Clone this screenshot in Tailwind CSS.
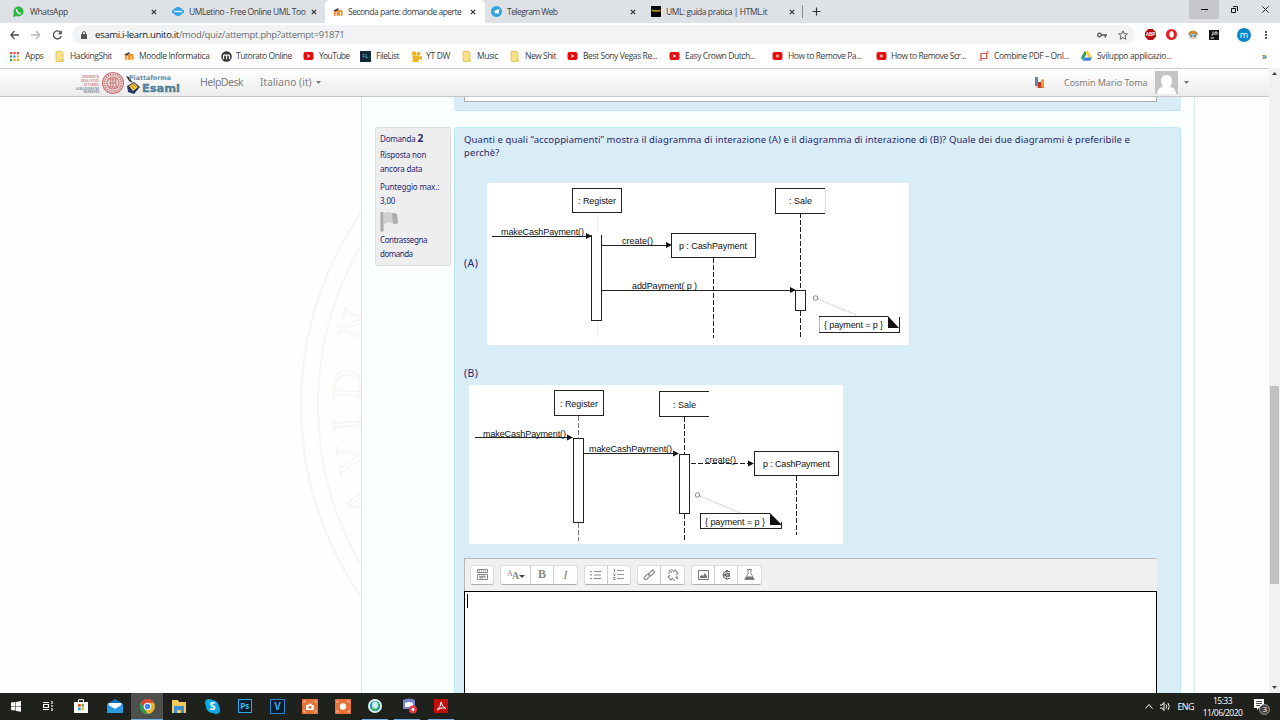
<!DOCTYPE html>
<html lang="it">
<head>
<meta charset="utf-8">
<title>Seconda parte: domande aperte</title>
<script src="https://cdn.jsdelivr.net/npm/@tailwindcss/browser@4"></script>
</head>
<body class="w-[1280px] h-[720px] overflow-hidden bg-white flex flex-col font-['Open_Sans',sans-serif] text-[#3c4043]">
<svg class="hidden">
  <defs>
    <symbol id="moodle" viewBox="0 0 12 10"><path d="M2 9V5q0-1.500 1.500-1.500T5 5v4M6.500 9V5Q6.500 3.500 8 3.500T9.500 5v4" fill="none" stroke="#f28c28" stroke-width="2"/><path d="M0 3.500 5 1l2 1-4 2.500z" fill="#444"/></symbol>
    <symbol id="folder" viewBox="0 0 9 11"><path d="M1 .5h6l1 1v9H1z" fill="#fbe08a" stroke="#e3bd4c" stroke-width=".8"/><path d="M6.500 8h2v2.500h-2z" fill="#e9c65c"/></symbol>
    <symbol id="yt" viewBox="0 0 11 8"><rect x=".5" width="10" height="8" rx="2" fill="#e60f0f"/><path d="M4.500 2.300v3.400L7.300 4z" fill="#fff"/></symbol>
    <symbol id="x" viewBox="0 0 6 6"><path d="m.8.8 4.400 4.400m0-4.400L.8 5.200" stroke="#333" stroke-width="1.200"/></symbol>
  </defs>
</svg>

<!-- tab strip -->
<div class="h-[23px] shrink-0 bg-[#dee1e6] flex text-[8.500px] leading-[23px] whitespace-nowrap">
  <div class="w-[166px] pl-[13px] pr-[9px] flex items-center">
    <svg class="w-[11px] h-[11px] mr-[6px]" viewBox="0 0 11 11"><circle cx="5.500" cy="5.500" r="5" fill="#2cb742"/><path d="M0 11 1 7l3 3z" fill="#2cb742"/><path d="M3.500 3.300c0 2.500 2 4.500 4.200 4.300" stroke="#fff" stroke-width="1.600" fill="none"/></svg>
    <span class="flex-1 tracking-[-0.35px]">WhatsApp</span><svg class="w-[6px] h-[6px]"><use href="#x"/></svg>
  </div>
  <div class="w-[159px] pl-[6px] pr-[8px] flex items-center">
    <svg class="w-[12px] h-[11px] mr-[5px]" viewBox="0 0 12 11"><circle cx="6" cy="5.500" r="4.500" fill="#35a5e5"/><rect y="3.800" width="12" height="3.400" rx="1" fill="#35a5e5"/><path d="M2 5.500h8" stroke="#d8effc" stroke-width="1.400"/></svg>
    <span class="flex-1 w-0 mr-[5px] tracking-[-0.42px]">UMLetino - Free Online UML Too</span><svg class="w-[6px] h-[6px]"><use href="#x"/></svg>
  </div>
  <div class="w-[160px] pl-[8px] pr-[9px] flex items-center bg-white rounded-t-[5px]">
    <svg class="w-[11px] h-[10px] mr-[4px]"><use href="#moodle"/></svg>
    <span class="flex-1 w-0 mr-[5px] tracking-[-0.5px]">Seconda parte: domande aperte</span><svg class="w-[6px] h-[6px]"><use href="#x"/></svg>
  </div>
  <div class="w-[160px] pl-[6px] pr-[9px] flex items-center">
    <svg class="w-[11px] h-[11px] mr-[5px]" viewBox="0 0 11 11"><circle cx="5.500" cy="5.500" r="5.500" fill="#2fa3dc"/><path d="m2 5.500 6.500-2.700-1.200 5.500L5.500 7l-1 1-.4-2z" fill="#fff"/></svg>
    <span class="flex-1 tracking-[-0.55px]">Telegram Web</span><svg class="w-[6px] h-[6px]"><use href="#x"/></svg>
  </div>
  <div class="w-[158px] pl-[6px] pr-[8px] flex items-center">
    <div class="w-[10px] h-[11px] mr-[5px] bg-black text-[#d9cc20] text-[4px] leading-[10px] tracking-[-0.3px] font-bold text-center">html</div>
    <span class="flex-1 tracking-[-0.45px]">UML: guida pratica | HTML.it</span><svg class="w-[6px] h-[6px]"><use href="#x"/></svg>
  </div>
  <div class="w-[386px] pl-0 flex items-center"><div class="w-px h-[13px] bg-[#888c91] -ml-px"></div>
    <svg class="w-[9px] h-[9px] ml-[9px]" viewBox="0 0 9 9"><path d="M4.500.5v8m-4-4h8" stroke="#333" stroke-width="1.200"/></svg></div>
  <div class="w-[30px] h-[19px] bg-[#c4c6cb] flex items-center justify-center"><div class="w-[7px] h-px bg-black"></div></div>
  <div class="w-[31px] h-[19px] flex items-center justify-center"><svg class="w-[7px] h-[7px]" viewBox="0 0 7 7"><path d="M.5 2.500h4v4h-4zM2 .6h4.500V5" fill="none" stroke="#111"/></svg></div>
  <div class="w-[30px] h-[19px] flex items-center justify-center"><svg class="w-[7px] h-[7px]" viewBox="0 0 7 7"><path d="m.3.3 6.400 6.400m0-6.400L.3 6.700" stroke="#111" stroke-width=".9"/></svg></div>
</div>

<!-- address bar -->
<div class="h-[23px] shrink-0 flex items-center pl-[10px] bg-white">
  <svg class="w-[53px] h-[12px] mr-[9px]" viewBox="0 0 53 12"><g fill="none" stroke-width="1.300"><path d="M9 6H.8M4.500 2 .8 6l3.700 4" stroke="#4a4d51"/><path d="M21 6h8.500M26 2l3.700 4L26 10" stroke="#b5b8bb"/><path d="M50.500 3.300A4 4 0 1 0 51.300 7" stroke="#4a4d51"/></g><path d="M51.800 1.300v4h-4z" fill="#4a4d51"/></svg>
  <div class="w-[1063px] h-[19px] rounded-full bg-[#f1f3f4] flex items-center pl-[9px] pr-[7px]">
    <svg class="w-[6px] h-[8px] mr-[8px]" viewBox="0 0 6 8"><rect y="3" width="6" height="5" rx=".5" fill="#555"/><path d="M1.500 3.500V2q0-1.400 1.500-1.400T4.500 2v1.500" fill="none" stroke="#555"/></svg>
    <div class="flex-1 text-[9.500px] leading-[18px] text-[#6a6e73] tracking-[-0.32px] whitespace-nowrap"><span class="text-[#202124]">esami.i-learn.unito.it</span>/mod/quiz/attempt.php?attempt=91871</div>
    <svg class="w-[10px] h-[6px] mr-[11px]" viewBox="0 0 10 6"><circle cx="2.500" cy="3" r="1.800" fill="none" stroke="#555" stroke-width="1.300"/><path d="M4 3h6M8.300 3v2.500" stroke="#555" stroke-width="1.500"/></svg>
    <svg class="w-[10px] h-[10px]" viewBox="0 0 10 10"><path d="m5 .8 1.200 2.900 3.200.2L7 6l.8 3.200L5 7.500 2.200 9.200 3 6 .6 3.900l3.200-.2z" fill="none" stroke="#555" stroke-width=".9"/></svg>
  </div>
  <div class="flex items-center pl-[10px]">
    <svg class="w-[11px] h-[11px] mr-[10px]" viewBox="0 0 11 11"><path d="M3.200 0h4.600L11 3.200v4.600L7.800 11H3.200L0 7.800V3.200z" fill="#b90d14"/><text x="5.500" y="7.300" font-family="Liberation Sans" font-weight="bold" font-size="4.600" fill="#fff" text-anchor="middle">ABP</text></svg>
    <svg class="w-[11px] h-[11px] mr-[11px]" viewBox="0 0 11 11"><circle cx="5.500" cy="5.500" r="5.500" fill="#e01f26"/><path d="M3.500 5V3.500h.8V2.500h.9V2h.8v.5h.9v1h.8V7L7 8.500H4.800L3 6z" fill="#fff"/></svg>
    <svg class="w-[10px] h-[10px] mr-[11px]" viewBox="0 0 10 10"><path d="M0 5q0-4 5-4.500 5 .5 5 4.500z" fill="#c98a3c"/><rect x="1" y="4" width="8" height="5" rx="2" fill="#e6d3b0"/><circle cx="3.300" cy="5.800" r="1.400" fill="#5087b8"/><circle cx="6.800" cy="5.800" r="1.400" fill="#5087b8"/></svg>
    <svg class="w-[10px] h-[10px] mr-[18px]" viewBox="0 0 10 10"><rect width="10" height="10" fill="#151515"/><path d="M1.500 8h3.500M4 1.500V5H2.500M6 5V2h2v3" stroke="#fff" stroke-width=".9" fill="none"/></svg>
    <div class="w-[14px] h-[14px] rounded-full bg-[#0a86cc] text-white text-[9px] leading-[13px] text-center mr-[14px]">m</div>
    <svg class="w-[2px] h-[8px]" viewBox="0 0 2 8"><path d="M0 0h2v2H0zM0 3h2v2H0zM0 6h2v2H0z" fill="#555"/></svg>
  </div>
</div>

<!-- bookmarks -->
<div class="h-[22px] pb-[2px] shrink-0 flex items-center pl-[10px] text-[8.500px] leading-[20px] tracking-[-0.5px] whitespace-nowrap bg-white [&>div]:flex [&>div]:items-center [&>div]:shrink-0">
  <div class="w-[45px]"><svg class="w-[9px] h-[9px] mr-[6px]" viewBox="0 0 9 9"><path d="M0 0h2.200v2.200H0zM3.400 0h2.200v2.200H3.400zM6.800 0H9v2.200H6.800z" fill="#d9453a"/><path d="M0 3.400h2.200v2.200H0z" fill="#3a9a54"/><path d="M3.400 3.400h2.200v2.200H3.400z" fill="#3d7de0"/><path d="M6.800 3.400H9v2.200H6.800zM3.400 6.800h2.200V9H3.400zM6.800 6.800H9V9H6.800z" fill="#e3a92c"/><path d="M0 6.800h2.200V9H0z" fill="#3a9a54"/></svg><span class="tracking-[-0.35px]">Apps</span></div>
  <div class="w-[69px]"><svg class="w-[9px] h-[11px] mr-[6px]"><use href="#folder"/></svg><span class="tracking-[-0.43px]">HackingShit</span></div>
  <div class="w-[97px]"><svg class="w-[11px] h-[10px] mr-[4px]"><use href="#moodle"/></svg><span class="tracking-[-0.4px]">Moodle Informatica</span></div>
  <div class="w-[82px]"><svg class="w-[11px] h-[11px] mr-[4px]" viewBox="0 0 11 11"><circle cx="5.500" cy="5.500" r="5.300" fill="#333"/><path d="M2.500 8.200V5q0-1.200 1.500-1.200T5.500 5v3.200M5.500 5Q5.500 3.800 7 3.800T8.500 5v3.200" fill="none" stroke="#fff" stroke-width="1.300"/></svg><span class="tracking-[-0.45px]">Tutorato Online</span></div>
  <div class="w-[57px]"><svg class="w-[11px] h-[8px] mr-[5px]"><use href="#yt"/></svg><span class="tracking-[-0.65px]">YouTube</span></div>
  <div class="w-[51px]"><span class="w-[11px] h-[11px] mr-[5px] bg-[#13293a] text-[#58b8dd] text-[6px] leading-[11px] text-center tracking-normal">FL</span>FileList</div>
  <div class="w-[51px]"><svg class="w-[11px] h-[11px] mr-[4px]" viewBox="0 0 11 11"><g fill="#eeb31c"><circle cx="3" cy="2.500" r="2.300"/><circle cx="7.500" cy="2.700" r="2"/><rect x="1.500" y="4.500" width="6.500" height="4.500" rx="1"/><path d="m8 6 3-1.500V9L8 8zM2 9h5l1 2H1z"/></g></svg><span class="tracking-[-0.3px]">YT DW</span></div>
  <div class="w-[48px]"><svg class="w-[9px] h-[11px] mr-[6px]"><use href="#folder"/></svg><span class="tracking-[-0.45px]">Music</span></div>
  <div class="w-[57px]"><svg class="w-[9px] h-[11px] mr-[6px]"><use href="#folder"/></svg>New Shit</div>
  <div class="w-[102px]"><svg class="w-[11px] h-[8px] mr-[5px]"><use href="#yt"/></svg><span class="tracking-[-0.43px]">Best Sony Vegas Re...</span></div>
  <div class="w-[103px]"><svg class="w-[11px] h-[8px] mr-[5px]"><use href="#yt"/></svg><span class="tracking-[-0.43px]">Easy Crown Dutch...</span></div>
  <div class="w-[104px]"><svg class="w-[11px] h-[8px] mr-[5px]"><use href="#yt"/></svg><span class="tracking-[-0.4px]">How to Remove Pa...</span></div>
  <div class="w-[103px]"><svg class="w-[11px] h-[8px] mr-[4px]"><use href="#yt"/></svg><span class="tracking-[-0.43px]">How to Remove Scr...</span></div>
  <div class="w-[102px]"><svg class="w-[10px] h-[10px] mr-[5px]" viewBox="0 0 10 10"><g fill="none" stroke="#dd6350"><rect x="2" y="2.500" width="5.500" height="5"/><circle cx="8.500" cy="1.500" r="1"/><path d="M0 9h3M2 3v6M8 3v4"/></g></svg><span class="tracking-[-0.4px]">Combine PDF – Onl...</span></div>
  <div class="w-[183px]"><svg class="w-[11px] h-[10px] mr-[5px]" viewBox="0 0 11 10"><path d="M3.700 0h3.500L3.500 6.500 1.800 9.500 0 6.500z" fill="#2da562"/><path d="M3.700 0h3.500L11 6.500H7.400z" fill="#f9cd3c"/><path d="M3.600 6.500H11L9.200 9.800H1.800z" fill="#3f7fe8"/></svg><span class="tracking-[-0.35px]">Sviluppo applicazio...</span></div>
  <div class="text-[10px] -ml-[2px]">»</div>
</div>

<!-- viewport -->
<div class="h-[625px] shrink-0 flex">
 <div class="w-[1269px] flex flex-col">
  <div class="h-[29px] shrink-0 border-t border-b border-t-[#c9cbce] border-b-[#c6c6c6] bg-linear-to-b from-white to-[#ececec] flex items-center pl-[75px] text-[#808080] text-[10px] font-['Noto_Sans',sans-serif] whitespace-nowrap">
    <svg class="w-[107px] h-[26px] shrink-0" viewBox="75 69 107 26">
      <g font-family="Liberation Sans" font-size="3.600" font-weight="bold" opacity=".8"><g fill="#c4686c"><text x="82" y="77" textLength="17" lengthAdjust="spacingAndGlyphs">UNIVERSITÀ</text><text x="81" y="81" textLength="18" lengthAdjust="spacingAndGlyphs">DEGLI STUDI</text><text x="84" y="85" textLength="15" lengthAdjust="spacingAndGlyphs">DI TORINO</text></g><g fill="#667084" font-size="3"><text x="76" y="88.500" textLength="23" lengthAdjust="spacingAndGlyphs">ALMA UNIVERSITAS</text><text x="83" y="92" textLength="16" lengthAdjust="spacingAndGlyphs">TAURINENSIS</text></g></g>
      <g fill="none" stroke="#c57b7d"><circle cx="113" cy="82" r="10.500" fill="#f1dcda" stroke-width="1.200"/><circle cx="113" cy="82" r="8.500" stroke-dasharray="1.300 1" stroke-width="1.800"/><circle cx="113" cy="82" r="6" stroke-width="1.200"/><path d="M110 78h6l-1 4 2 4h-7l1-4zM109 82h8M113 77v10" stroke-width="1.100"/></g>
      <path d="m127 85 7-4 6 5-6 7-6-2z" fill="#26366a"/><path d="m129 85 5-3 4 4-5 4z" fill="#f1d336"/><path d="m131 84 3 4M133 83l3 3" stroke="#e06030"/><path d="m126 75 3 5 4 2-4-6z" fill="#333"/>
      <g font-family="DejaVu Sans" font-weight="bold" fill="#5e92ac"><text x="129" y="79" font-size="6.500" textLength="42" lengthAdjust="spacingAndGlyphs">Piattaforma</text><text x="142" y="91" font-size="10.500" fill="#4d89a9" stroke="#3d6e89" stroke-width=".3" textLength="38" lengthAdjust="spacingAndGlyphs">Esami</text></g>
    </svg>
    <span class="ml-[18px] w-[60px] tracking-[-0.5px] text-[10.500px]">HelpDesk</span>
    <span class="tracking-[0.1px]">Italiano (it)</span>
    <svg class="w-[5px] h-[3px] ml-[4px]" viewBox="0 0 5 3"><path d="M0 0h5L2.500 3z" fill="#777"/></svg>
    <div class="flex-1"></div>
    <svg class="w-[12px] h-[13px] mr-[18px]" viewBox="0 0 12 13"><path d="M1 1h3v9H1z" fill="#5e87a0"/><path d="M4 6h3v6H4z" fill="#c8322c"/><path d="M7 3.500h3V12H7z" fill="#e8a02c"/><path d="M1 10.500 12 12H5z" fill="#a95c28"/></svg>
    <span class="text-[9px] tracking-[-0.05px] w-[91px]">Cosmin Mario Toma</span>
    <svg class="w-[23px] h-[23px]" viewBox="0 0 23 23"><path fill="#c4c4c4" d="M0 0h23v23H0z"/><path d="M2 23q0-6 6-7-2-3-2-6 0-6 5.500-6T17 10q0 3-2 6 6 1 6 7z" fill="#fff"/></svg>
    <svg class="w-[5px] h-[3px] ml-[6px] mr-[80px]" viewBox="0 0 5 3"><path d="M0 0h5L2.500 3z" fill="#777"/></svg>
  </div>

  <div class="h-[596px] relative flex overflow-hidden bg-[#fefefe]">
    <svg class="absolute left-[290px] top-0 w-[71px] h-[596px]" viewBox="290 97 71 596">
      <g fill="none" stroke="#f7f5f5"><circle cx="638" cy="405" r="337" stroke-width="2.500"/><circle cx="638" cy="405" r="320" stroke-width="2"/>
      <g font-family="Liberation Serif" font-size="42" stroke="#f8f4f4" stroke-width="1.100" text-anchor="middle"><text transform="translate(368 328) rotate(-75)">N</text><text transform="translate(361 385) rotate(-88)">D</text><text transform="translate(361 423) rotate(-95)">I</text><text transform="translate(365 456) rotate(-100)">V</text><text transform="translate(374 497) rotate(-107)">A</text></g></g>
    </svg>
    <div class="w-[834px] ml-[361px] border-x border-[#d3f0ee] bg-[#fbfffe] relative pl-[13px] flex flex-col">
      <div class="h-[14px] shrink-0 w-[727px] ml-[79px] bg-[#d9edf7] border-b border-[#bce8f1] rounded-b-[3px] pl-[10px]"><div class="w-[693px] h-[5px] bg-white border border-t-0 border-[#aaa]"></div></div>
      <div class="flex mt-[16px]">
        <div class="w-[76px] h-[139px] bg-[#eee] border border-[#ddd] rounded-[2px] mr-[3px] shrink-0 pl-[4px] text-[#2a2670] text-[8px] leading-[13.500px] font-['Noto_Sans',sans-serif] whitespace-nowrap">
          <div class="mt-[3px] h-[14px] leading-[14px] tracking-[-0.2px]">Domanda <b class="text-[10px]">2</b></div>
          <div class="mt-[3px] tracking-[-0.2px]">Risposta non<br>ancora data</div>
          <div class="mt-[5px] tracking-[-0.15px]">Punteggio max.:<br>3,00</div>
          <svg class="w-[19px] h-[21px] mt-[4px]" viewBox="0 0 19 21"><path d="M.5 1h3v19.500h-3z" fill="#aaa"/><path d="M4 2q4-2 8 0l5 1 1 9q-3 2-6 0-4-2-8 1z" fill="#cfcfcf"/><path d="M12 2q3 0 5 1l1 9q-3 2-5 0z" fill="#aeaeae"/></svg>
          <div class="mt-[1px] tracking-[-0.5px]"><span class="tracking-[-0.4px]">Contrassegna</span><br>domanda</div>
        </div>
        <div class="w-[727px] h-[580px] bg-[#d9edf7] border border-[#bce8f1] rounded-[3px] pl-[9px] shrink-0 text-[#2a2670] text-[9.500px] leading-[13px] font-['Noto_Sans',sans-serif]">
          <div class="mt-[5px] whitespace-nowrap tracking-[0.095px]">Quanti e quali “accoppiamenti” mostra il diagramma di interazione (A) e il diagramma di interazione di (B)? Quale dei due diagrammi è preferibile e<br>perchè?</div>
          <div class="mt-[24px] flex h-[162px]">
            <span class="w-[23px] mt-[74px] text-[10.500px] tracking-[0.4px]">(A)</span>
            <svg class="w-[422px] h-[162px] bg-white" viewBox="487 183 422 162" font-family="Liberation Sans" font-size="9" fill="#111">
              <g fill="none" stroke="#222" shape-rendering="crispEdges">
                <path d="M572.500 188.500h49v24h-49zM825 188.500h-49.500v25H825M671.500 233.500h84v24h-84zM591.500 235v85.500h10V235"/>
                <path d="M492 236.500h94M602 245.500h64M602 290.500h188M795.500 290.500h10v20h-10z"/>
                <path d="M597.500 213v22M597.500 321v18" stroke="#eee"/><path d="M825.500 189v24" stroke="#ddd"/>
                <path d="M713.500 258v80M800.500 213v77M800.500 311v27" stroke-dasharray="5 2"/>
                <path d="M819 332.500h80.500V317M819 316.500h69" /><path d="M819.500 317v15" stroke="#bbb"/>
              </g>
              <path d="m592 236-6-3v6zM672 245l-6-3v6zM796 290l-6-3v6zM888 316v12h11z"/>
              <circle cx="815.500" cy="298" r="2.200" fill="none" stroke="#888"/><path d="m818 299 38 16" stroke="#999" stroke-dasharray="1 1.500"/>
              <text x="578" y="204" textLength="38">: Register</text><text x="789" y="204" textLength="23">: Sale</text><text x="679" y="249" textLength="68">p : CashPayment</text><text x="501" y="235" textLength="83">makeCashPayment()</text><text x="622" y="244" textLength="31">create()</text><text x="632" y="289" textLength="65">addPayment( p )</text><text x="824" y="328" textLength="59">{ payment = p }</text>
            </svg>
          </div>
          <div class="mt-[22px] h-[18px] text-[10.500px] tracking-[0.4px]">(B)</div>
          <svg class="ml-[5px] w-[374px] h-[159px] bg-white" viewBox="469 385 374 159" font-family="Liberation Sans" font-size="9" fill="#111">
            <g fill="none" stroke="#222" shape-rendering="crispEdges">
              <path d="M554.500 390.500h48.500v25h-48.500zM709 391.500h-49.500v25H709M754.500 451.500h84v24h-84zM573.500 438.500h10v84h-10zM679.500 454.500h10v59h-10z"/>
              <path d="M475 437.500h93M584 453.500h90"/><path d="M691 463.500h58M684.500 417v37M684.500 514v27M796.500 476v59" stroke-dasharray="5 2"/>
              <path d="M578.500 416v22M578.500 523v18" stroke="#777" stroke-dasharray="5 2"/><path d="M770 513.500h-69.500v15h81V522"/>
            </g>
            <path d="m573 437.500-6-3v6zM679 453.500l-6-3v6zM754 463.500l-6-3v6zM770 513v12h12z"/>
            <circle cx="697.500" cy="495" r="2.200" fill="none" stroke="#888"/><path d="m700 496 40 17" stroke="#999" stroke-dasharray="1 1.500"/>
            <text x="560" y="407" textLength="38">: Register</text><text x="673" y="408" textLength="23">: Sale</text><text x="763" y="467" textLength="67">p : CashPayment</text><text x="483" y="437" textLength="83">makeCashPayment()</text><text x="589" y="452" textLength="83">makeCashPayment()</text><text x="705" y="463" textLength="31">create()</text><text x="705" y="525" textLength="60">{ payment = p }</text>
          </svg>
          <!-- rich text editor -->
          <div class="mt-[14px] w-[693px]">
            <div class="h-[33px] bg-[#f0f0f0] border border-b-0 border-[#b8b8b8] border-r-[#eee] pl-[5px] pb-px flex items-center gap-[6px] text-[#888] font-['Liberation_Serif',serif] [&>div]:flex [&>div]:h-[20px] [&>div]:rounded-[3px] [&>div]:border [&>div]:border-[#dcdcdc] [&>div]:border-b-[#b0b0b0] [&>div]:bg-white [&>div]:divide-x [&>div]:divide-[#ccc] [&_span]:flex [&_span]:items-center [&_span]:justify-center [&_span]:w-[23px]">
              <div class="w-[24px]"><span><svg class="w-[11px] h-[11px]" viewBox="0 0 11 11"><path d="M.5.500h10v3H.5zM.5 5.500h10v5H.5z" fill="none" stroke="#888"/><path d="M2 2h7" stroke="#888" stroke-dasharray="1 1"/><path d="M2 7h1v2h1V7h1v2h1V7h2v2" fill="none" stroke="#888"/></svg></span></div>
              <div class="w-[78px]"><span class="!w-[30px] text-[10px]"><svg class="w-[18px] h-[12px]" viewBox="0 0 18 12" fill="#888"><text x="0" y="7" font-size="8" font-family="Liberation Serif">A</text><text x="5" y="10" font-size="10" font-family="Liberation Serif" font-weight="bold">A</text><path d="M12 6h6l-3 3z" fill="#444"/></svg></span><span class="text-[12px] font-bold">B</span><span class="text-[13px] italic">I</span></div>
              <div class="w-[47px]"><span><svg class="w-[11px] h-[10px]" viewBox="0 0 11 10"><path d="M4 1.500h7M4 5h7M4 8.500h7M0 1.500h2M0 5h2M0 8.500h2" stroke="#888"/></svg></span><span><svg class="w-[11px] h-[11px]" viewBox="0 0 11 11"><path d="M4 1.500h7M4 5.500h7M4 9.500h7M1.500 0v3M0 5h2v1.500H.5M0 8.500h2v2H0" fill="none" stroke="#888" stroke-width=".9"/></svg></span></div>
              <div class="w-[48px]"><span><svg class="w-[12px] h-[12px]" viewBox="0 0 12 12"><g fill="none" stroke="#888" stroke-width="1.200"><rect x="5" y="2.800" width="6.500" height="3.200" rx="1.600" transform="rotate(-45 8 4)"/><rect x=".8" y="6.300" width="6.500" height="3.200" rx="1.600" transform="rotate(-45 4 8)"/></g></svg></span><span><svg class="w-[12px] h-[12px]" viewBox="0 0 12 12"><g fill="none" stroke="#888" stroke-width="1.100"><path d="m6 3 2-2 3 3-2 2M3 6 1 8l3 3 2-2M2 1l2.500 2.500M11 10 8.500 8M1 4h2M5 0v2M9 8h2M7 10v2"/></g></svg></span></div>
              <div class="w-[71px]"><span><svg class="w-[11px] h-[10px]" viewBox="0 0 11 10"><path d="M.5.500h10v9H.5z" fill="none" stroke="#777"/><path d="m2 8 0-2 2-1 1 1 2-3 2 3v2z" fill="#777"/></svg></span><span><svg class="w-[10px] h-[10px]" viewBox="0 0 10 10"><path d="M9 2.200A4 4 0 1 0 9 7.800M7.500 3.500a2 2 0 1 0 0 3M3 5h6M6 0v2M8 3v4" fill="none" stroke="#444" stroke-width="1"/></svg></span><span><svg class="w-[11px] h-[11px]" viewBox="0 0 11 11"><path d="M3 .5h5M4 .5v4L.8 10.500h9.400L7 4.500v-4" fill="none" stroke="#888"/><path d="M2.500 7.500h6l1.700 3H.8z" fill="#777"/></svg></span></div>
            </div>
            <div class="h-[110px] bg-white border border-black pl-[2px] pt-[2px]"><div class="w-px h-[14px] bg-black"></div></div>
          </div>
        </div>
      </div>
    </div>
  </div>
 </div>
 <!-- scrollbar -->
 <div class="w-[11px] bg-[#f1f1f1] flex flex-col items-center py-[4px]">
   <svg class="w-[5px] h-[3px] shrink-0" viewBox="0 0 5 3"><path d="M0 3h5L2.500 0z" fill="#444"/></svg>
   <div class="h-[198px] shrink-0 w-[9px] bg-[#c1c1c1] mt-[311px]"></div>
   <div class="flex-1"></div>
   <svg class="w-[5px] h-[3px] shrink-0" viewBox="0 0 5 3"><path d="M0 0h5L2.500 3z" fill="#444"/></svg>
 </div>
</div>

<!-- taskbar -->
<div class="h-[27px] shrink-0 bg-[#1f211d] flex text-white [&>i]:w-[32.700px] [&>i]:h-full [&>i]:flex [&>i]:items-center [&>i]:justify-center [&>i]:shrink-0 [&>i]:not-italic [&>i]:border-b [&>i]:border-transparent">
  <i class="!w-[32px]"><svg class="w-[10px] h-[11px]" viewBox="0 0 10 11"><path d="M0 1.500 4.500 1v4H0zM5 .9 10 0v5H5zM0 5.600h4.500v4L0 9zM5 5.600h5v5.200L5 10z" fill="#fff"/></svg></i>
  <i class="!w-[32px]"><svg class="w-[11px] h-[10px]" viewBox="0 0 11 10"><path d="M0 1.500h6M0 8.500h6M.5 3.500h5v3h-5zM9 0v3M9 4v2M9 7v3" stroke="#fff" fill="none" stroke-width="1.200"/></svg></i>
  <i class="!w-[34px]"><svg class="w-[14px] h-[14px]" viewBox="0 0 14 14"><path d="M0 3h14v11H0z" fill="#fff"/><path d="M4.500 3V.7h5V3" fill="none" stroke="#fff"/><path d="M4 5h2.700v2.700H4z" fill="#e64b26"/><path d="M7.400 5h2.700v2.700H7.400z" fill="#79b82a"/><path d="M4 8.500h2.700v2.700H4z" fill="#2aa0dc"/><path d="M7.400 8.500h2.700v2.700H7.400z" fill="#f2b81a"/></svg></i>
  <i class="!w-[33px]"><svg class="w-[16px] h-[14px]" viewBox="0 0 16 14"><path d="m0 5 8-5 8 5v9H0z" fill="#1270bd"/><path d="M1.500 4h13v3L8 10 1.500 7z" fill="#fff"/><path d="m0 5 8 5 8-5v9H0z" fill="#2b9be3"/></svg></i>
  <i class="!w-[32px] bg-[#4e504d] !border-[#76b0e8]"><svg class="w-[15px] h-[15px]" viewBox="0 0 16 16"><circle cx="8" cy="8" r="8" fill="#e3b52c"/><path d="M1 4a8 8 0 0 1 14 0H8L4.500 9z" fill="#db4437"/><path d="M1 4 5 10.500 8 16A8 8 0 0 1 1 4z" fill="#289b56"/><circle cx="8" cy="8" r="4" fill="#fff"/><circle cx="8" cy="8" r="3" fill="#4285f4"/></svg></i>
  <i><svg class="w-[14px] h-[13px]" viewBox="0 0 14 13"><path d="M0 0h6l1 2h7v11H0z" fill="#f5ca59"/><path d="M2 6h10v7H9v-3H5v3H2z" fill="#3c91d6"/></svg></i>
  <i><svg class="w-[15px] h-[15px]" viewBox="0 0 15 15"><circle cx="7.500" cy="7.500" r="6.500" fill="#0baae6"/><circle cx="4" cy="4" r="4" fill="#0baae6"/><circle cx="11" cy="11" r="4" fill="#0baae6"/><text x="7.500" y="11.300" font-size="11" font-weight="bold" fill="#fff" text-anchor="middle" font-family="Open Sans">S</text></svg></i>
  <i><b class="w-[14px] h-[14px] border border-[#25aee4] bg-[#071d2e] text-[#31bff4] text-[8px] leading-[12px] text-center">Ps</b></i>
  <i><b class="w-[15px] h-[15px] border border-[#2889c8] bg-[#0c1a2c] text-[#3aa8ec] text-[10px] leading-[13px] text-center">V</b></i>
  <i><svg class="w-[16px] h-[15px]" viewBox="0 0 16 15"><path d="M0 0h16v15H0z" fill="#e4733a"/><path d="M4 6h2l1-1.500h2L10 6h2v5H4z" fill="#fff"/><circle cx="8" cy="8.300" r="1.500" fill="#e4733a"/><path d="M2 4V2h2M12 2h2v2M2 11v2h2M12 13h2v-2" stroke="#f5c0a0" fill="none"/></svg></i>
  <i><svg class="w-[16px] h-[15px]" viewBox="0 0 16 15"><path d="M0 0h16v15H0z" fill="#e4733a"/><circle cx="8" cy="7.500" r="3.200" fill="#fff"/><path d="M2 4V2h2M12 2h2v2M2 11v2h2M12 13h2v-2" stroke="#f5c0a0" fill="none"/></svg></i>
  <i class="!w-[26px] ml-[3px] mr-[6px] !border-[#76b0e8]"><svg class="w-[14px] h-[14px]" viewBox="0 0 14 14"><circle cx="7" cy="7" r="7" fill="#e9f4f2"/><circle cx="7" cy="7" r="5.200" fill="#129ac4"/><path d="M3 10q4-7 8-6 0 6-4 8z" fill="#49b958"/><ellipse cx="7" cy="6" rx="3" ry="3.500" fill="#c9edf3"/></svg></i>
  <i class="!w-[26px] mr-[7px] !border-[#76b0e8]"><svg class="w-[15px] h-[16px] ml-[4px]" viewBox="0 0 15 16"><path d="M1 2q6-3 12 0v11l-3-2H1z" fill="#7785cc"/><path d="M3 5q4-2 8 0v4H3z" fill="#fff"/><circle cx="11" cy="11.500" r="4" fill="#e43e49"/><circle cx="11" cy="11.500" r="1.400" fill="#fff"/></svg></i>
  <i class="!w-[26px] ml-px !border-[#76b0e8]"><svg class="w-[14px] h-[14px]" viewBox="0 0 14 14"><path d="M0 0h14v14H0z" fill="#c40d0d"/><path d="M3 11q4-3 4-8 1 5 4.500 6Q7 8 3 11z" fill="none" stroke="#fff"/></svg></i>
  <div class="flex-1"></div>
  <div class="flex items-center text-[9px] tracking-[-0.6px] pr-[10px] whitespace-nowrap">
    <svg class="w-[8px] h-[5px] mr-[7px]" viewBox="0 0 8 5"><path d="m.5 4.500 3.500-4 3.500 4" stroke="#fff" fill="none"/></svg>
    <svg class="w-[10px] h-[9px] mr-[7px]" viewBox="0 0 10 9"><path d="M0 3h2l2-2.500v8L2 6H0M6 2.500q1.500 2 0 4M8 1q2.500 3.500 0 7" fill="none" stroke="#fff"/></svg>
    <span class="mr-[9px]">ENG</span>
    <div class="text-[8.500px] leading-[12px] tracking-[-0.55px] text-center w-[39px] mr-[12px] flex flex-col items-center"><span>15:33</span><span>11/06/2020</span></div>
    <svg class="w-[16px] h-[18px]" viewBox="0 0 16 18"><path d="M0 1h10v9H5l-2 2v-2H0z" fill="#fff"/><path d="M2 3.500h6M2 5.500h6M2 7.500h4" stroke="#222" stroke-width=".8"/><circle cx="10.500" cy="11.500" r="5" fill="#444" stroke="#999"/><text x="10.500" y="14.300" fill="#fff" font-size="8" text-anchor="middle">3</text></svg>
  </div>
</div>
</body>
</html>
